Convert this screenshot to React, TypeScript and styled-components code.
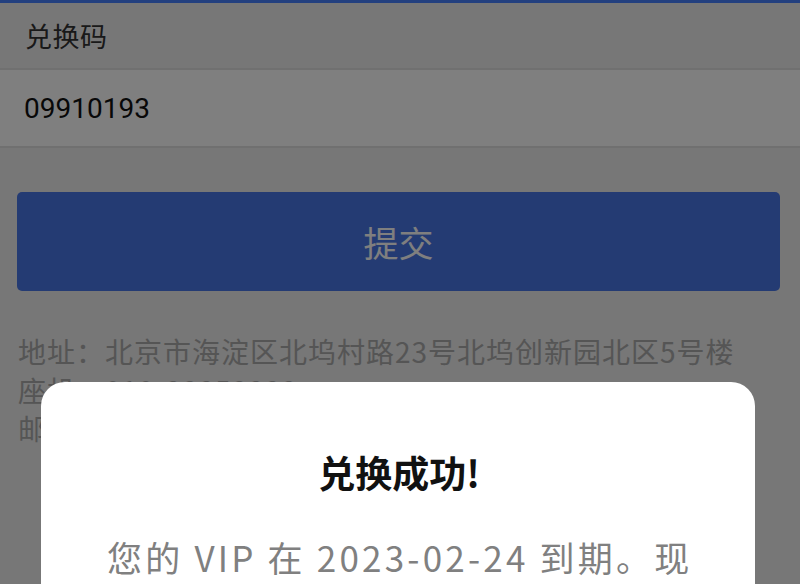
import React from "react";
import styled, { createGlobalStyle } from "styled-components";

const Global = createGlobalStyle`
  html, body { margin: 0; padding: 0; }
  body {
    background: #eeeeee;
    font-family: "Noto Sans CJK SC", "Noto Sans", sans-serif;
    overflow: hidden;
  }
`;

const Page = styled.div`
  width: 800px;
  height: 584px;
  display: flex;
  flex-direction: column;
  background: #eeeeee;
`;

const TopBar = styled.div`
  height: 3px;
  background: #4680fe;
`;

const LabelRow = styled.div`
  height: 65px;
  display: flex;
  align-items: center;
  padding-left: 25px;
  font-size: 27px;
  letter-spacing: 0.5px;
  color: #333;
  border-bottom: 2px solid #e0e0e0;
`;

const InputRow = styled.div`
  height: 76px;
  display: flex;
  align-items: center;
  padding-left: 24px;
  background: #ffffff;
  border-bottom: 2px solid #e0e0e0;
  font-family: Roboto, "Noto Sans CJK SC", sans-serif;
  font-size: 28px;
  color: #111;
`;

const SubmitButton = styled.div`
  margin: 44px 20px 0 17px;
  height: 99px;
  border-radius: 5px;
  background: #4876e6;
  color: #ffffff;
  font-size: 35px;
  display: flex;
  align-items: center;
  justify-content: center;
`;

const Info = styled.div`
  margin-top: 41px;
  padding-left: 18px;
  font-size: 28px;
  line-height: 38.5px;
  letter-spacing: 1px;
  color: #aaaaaa;
`;

const Overlay = styled.div`
  position: fixed;
  inset: 0;
  background: rgba(0, 0, 0, 0.5);
`;

const Dialog = styled.div`
  position: fixed;
  left: 41px;
  top: 382px;
  width: 714px;
  height: 400px;
  background: #ffffff;
  border-radius: 24px;
  box-sizing: border-box;
  padding: 64px 50px 0 66px;
`;

const Title = styled.div`
  text-align: center;
  font-size: 37px;
  line-height: 52px;
  font-weight: 700;
  color: #111;
  padding-right: 14px;
`;

const Message = styled.div`
  margin-top: 34px;
  font-size: 35px;
  line-height: 50px;
  letter-spacing: 3.2px;
  color: #808080;
`;

export default function App() {
  return (
    <>
      <Global />
      <Page>
        <TopBar />
        <LabelRow>兑换码</LabelRow>
        <InputRow>09910193</InputRow>
        <SubmitButton>提交</SubmitButton>
        <Info>
          <div>地址：北京市海淀区北坞村路23号北坞创新园北区5号楼</div>
          <div>座机：010-88858888</div>
          <div>邮编：100093</div>
        </Info>
      </Page>
      <Overlay />
      <Dialog>
        <Title>兑换成功!</Title>
        <Message>您的 VIP 在 2023-02-24 到期。现在可以使用全部会员功能。</Message>
      </Dialog>
    </>
  );
}
